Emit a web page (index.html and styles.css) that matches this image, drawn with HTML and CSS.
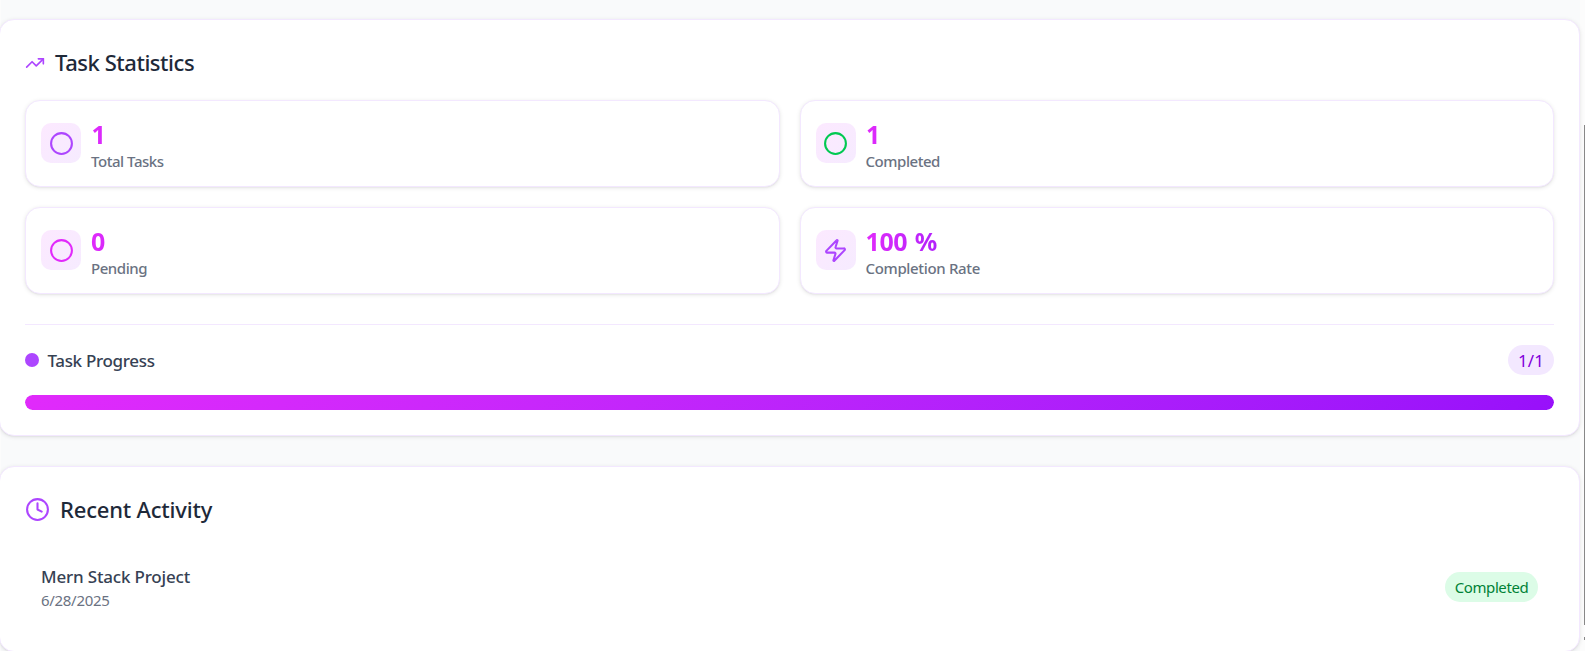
FILE: index.html
```html
<!DOCTYPE html>
<html lang="en">
<head>
<meta charset="utf-8">
<title>Dashboard</title>
<link rel="stylesheet" href="styles.css">
</head>
<body>
<div class="page">
  <main class="panel">
    <section class="card stats-card">
      <h2 class="title title-stats">
        <svg class="icon-trend" viewBox="0 0 24 24"><path d="M22 7l-8.500 8.500-5-5L2 17"/><path d="M16 7h6v6"/></svg>
        <span>Task Statistics</span>
      </h2>
      <div class="grid">
        <div class="stat">
          <div class="badge purple"><svg viewBox="0 0 24 24"><circle cx="12" cy="12" r="10"/></svg></div>
          <div class="stat-text"><p class="num one">1</p><p class="label total">Total Tasks</p></div>
        </div>
        <div class="stat">
          <div class="badge green"><svg viewBox="0 0 24 24"><circle cx="12" cy="12" r="10"/></svg></div>
          <div class="stat-text"><p class="num one">1</p><p class="label">Completed</p></div>
        </div>
        <div class="stat">
          <div class="badge fuchsia"><svg viewBox="0 0 24 24"><circle cx="12" cy="12" r="10"/></svg></div>
          <div class="stat-text"><p class="num">0</p><p class="label">Pending</p></div>
        </div>
        <div class="stat">
          <div class="badge purple"><svg viewBox="0 0 24 24"><path d="M4 14a1 1 0 0 1-.78-1.630l9.900-10.200a.5.5 0 0 1 .86.46l-1.920 6.020A1 1 0 0 0 13 10h7a1 1 0 0 1 .78 1.630l-9.900 10.200a.5.5 0 0 1-.86-.46l1.920-6.020A1 1 0 0 0 11 14z"/></svg></div>
          <div class="stat-text"><p class="num percent">100 %</p><p class="label rate">Completion Rate</p></div>
        </div>
      </div>
      <div class="progress">
        <div class="progress-head">
          <div class="progress-name"><i class="dot"></i><span>Task Progress</span></div>
          <span class="count">1/1</span>
        </div>
        <div class="track"><div class="fill" style="width:100%"></div></div>
      </div>
    </section>
    <section class="card activity-card">
      <h2 class="title title-activity">
        <svg class="icon-clock" viewBox="0 0 24 24"><circle cx="12" cy="12" r="10"/><path d="M12 6v6l4 2"/></svg>
        <span>Recent Activity</span>
      </h2>
      <div class="activity">
        <div><p class="task">Mern Stack Project</p><p class="date">6/28/2025</p></div>
        <span class="status">Completed</span>
      </div>
    </section>
  </main>
  <div class="scrollbar"><div class="thumb"></div><div class="arrow"></div></div>
</div>
</body>
</html>
```
FILE: styles.css
```css
* { box-sizing: border-box; margin: 0; padding: 0; }
body { background: #fcfcfc; font-family: "Noto Sans", "Open Sans", sans-serif; overflow: hidden; }
.page { display: flex; width: 1585px; height: 651px; overflow: hidden; }
.panel { flex: none; width: 1581px; height: 651px; margin-left: -1px; padding-top: 19px; background: linear-gradient(#f9fafb, #f9fafb) no-repeat 2px 0 / 1579px 100%; }
.card { background: #fff; border: 1px solid #f3e8ff; border-radius: 15px; box-shadow: 0 1px 4px rgba(0,0,0,.1), 0 1px 2px -1px rgba(0,0,0,.1); padding: 25px; }
.stats-card { height: 417px; }
.activity-card { height: 186px; margin-top: 30px; }
svg { display: block; fill: none; stroke: currentColor; stroke-width: 2; stroke-linecap: round; stroke-linejoin: round; }
.title { display: flex; align-items: center; height: 35px; font-size: 22px; font-weight: 500; color: #1e2939; white-space: nowrap; }
.title svg { color: #ad46ff; }
.title span { padding-bottom: 2px; }
.title-stats { letter-spacing: -.45px; }
.title-activity { letter-spacing: -.2px; }
.icon-trend { width: 20px; height: 20px; margin-right: 10px; }
.icon-clock { width: 25px; height: 25px; margin-right: 10px; }
.grid { display: grid; grid-template-columns: 1fr 1fr; gap: 20px; margin-top: 20px; }
.stat { display: flex; align-items: flex-start; height: 87px; padding: 22px 15px 0; gap: 10px; border: 1px solid #f3e8ff; border-radius: 15px; box-shadow: 0 1px 4px rgba(0,0,0,.1), 0 1px 2px -1px rgba(0,0,0,.1); background: #fff; }
.badge { width: 40px; height: 40px; padding: 7.500px; border-radius: 10px; background: linear-gradient(135deg, #fce9ff, #f6ebff); }
.badge svg { width: 25px; height: 25px; }
.purple { color: #ad46ff; }
.green { color: #00c951; }
.fuchsia { color: #e12afb; }
.num { width: 114px; height: 26px; line-height: 22px; font-size: 25px; font-weight: 700; background: linear-gradient(90deg in oklab, #e12afb, #9810fa); -webkit-background-clip: text; background-clip: text; color: transparent; }
.one { padding-left: .5px; }
.percent { letter-spacing: -.4px; word-spacing: 1.500px; }
.label { height: 22px; line-height: 22px; margin-top: 1px; font-size: 15px; font-weight: 500; letter-spacing: -.45px; color: #6a7282; white-space: nowrap; }
.rate { letter-spacing: -.34px; }
.progress { margin-top: 30px; border-top: 1px solid #f3e8ff; padding-top: 20px; }
.progress-head { display: flex; align-items: center; justify-content: space-between; height: 30px; }
.progress-name { display: flex; align-items: center; gap: 8px; font-size: 17px; font-weight: 500; letter-spacing: -.32px; color: #364153; }
.dot { width: 14px; height: 14px; margin: 0 0 1px .4px; border-radius: 50%; background: #ad46ff; }
.count { width: 46px; height: 30px; line-height: 31px; text-align: center; border-radius: 15px; background: #f3e8ff; color: #8200db; font-size: 17px; }
.track { height: 15px; margin-top: 20px; border-radius: 8px; overflow: hidden; background: #f3e8ff; }
.fill { height: 100%; border-radius: 8px; background: linear-gradient(135deg in oklab, #e12afb, #9810fa); }
.activity { display: flex; align-items: center; justify-content: space-between; height: 70px; margin-top: 25px; padding: 0 16px; }
.task { height: 25px; line-height: 25px; font-size: 17px; font-weight: 500; letter-spacing: -.18px; color: #364153; }
.date { height: 22px; line-height: 22px; font-size: 15px; letter-spacing: -.3px; color: #6a7282; }
.status { width: 93px; height: 30px; line-height: 30px; text-align: center; border-radius: 15px; background: #dcfce7; color: #008236; font-size: 15px; letter-spacing: -.4px; }
.scrollbar { flex: none; width: 5px; height: 651px; padding: 125px 0 0 4px; }
.thumb { width: 1px; height: 500px; background: #888; }
.arrow { width: 1px; height: 3px; margin-top: 12px; background: #888; }
```
